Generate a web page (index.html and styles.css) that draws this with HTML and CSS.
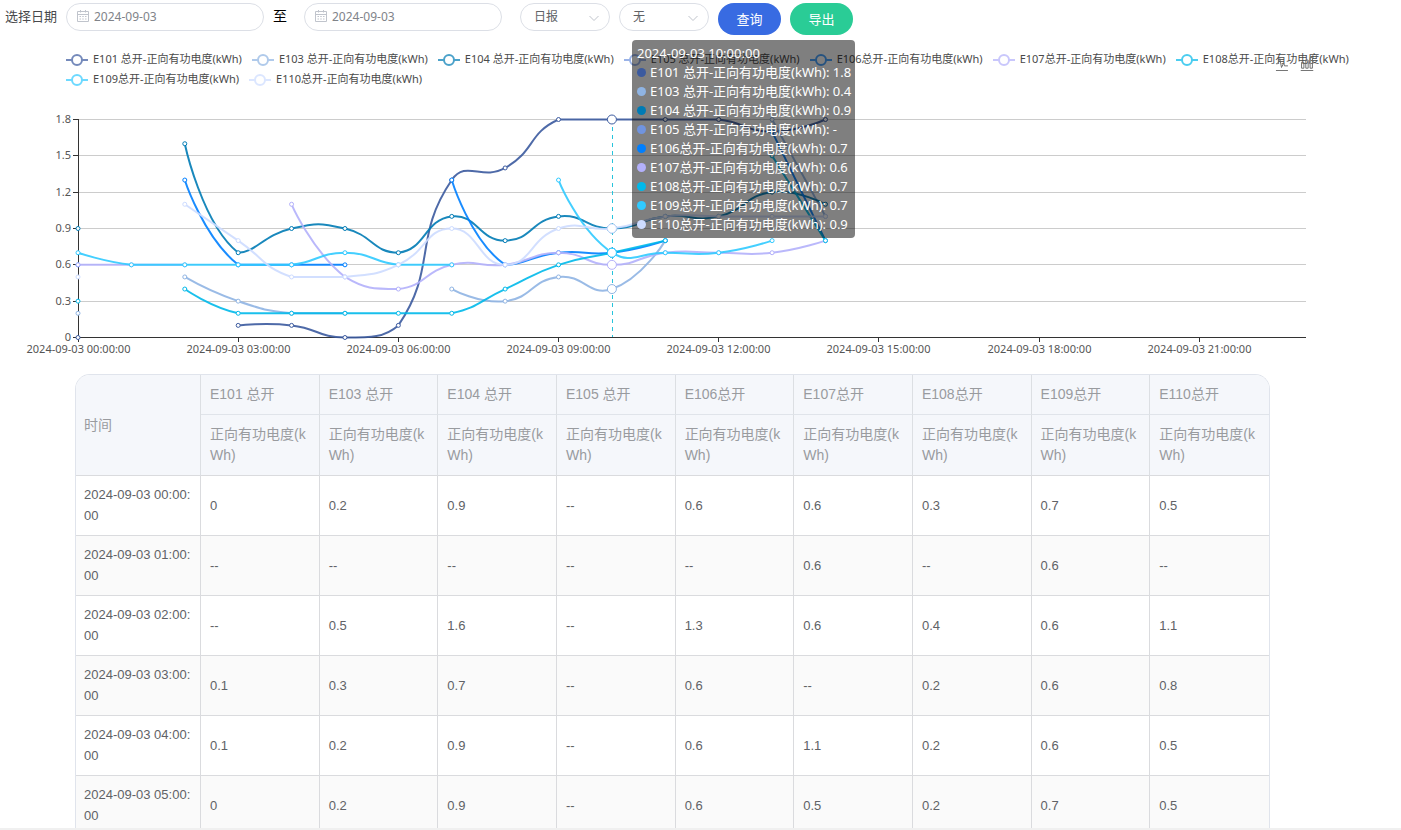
FILE: index.html
```html
<!DOCTYPE html>
<html lang="zh-CN">
<head>
    <meta charset="UTF-8">
    <title>电度报表</title>
    <link rel="stylesheet" href="styles.css">
</head>
<body>
    <form class="toolbar">
        <label class="toolbar-label" for="startDate">选择日期</label>
        <div class="date-box">
            <svg class="icon-date" viewBox="0 0 12 12"><path d="M.5 1.5h11v10H.5zM.5 4.5h11M3.5 0v2.5M8.5 0v2.5M2.5 6.5h1.5M5.25 6.5h1.5M8 6.5h1.5M2.5 9h1.5M5.25 9h1.5M8 9h1.5"/></svg>
            <input type="text" id="startDate" value="2024-09-03">
        </div>
        <label class="toolbar-to" for="endDate">至</label>
        <div class="date-box">
            <svg class="icon-date" viewBox="0 0 12 12"><path d="M.5 1.5h11v10H.5zM.5 4.5h11M3.5 0v2.5M8.5 0v2.5M2.5 6.5h1.5M5.25 6.5h1.5M8 6.5h1.5M2.5 9h1.5M5.25 9h1.5M8 9h1.5"/></svg>
            <input type="text" id="endDate" value="2024-09-03">
        </div>
        <div class="select-box select-first">
            <select id="reportType" aria-label="报表类型"><option>日报</option><option>月报</option><option>年报</option></select>
            <svg class="icon-arrow" viewBox="0 0 12 12"><path d="M1.5 4L6 8.5 10.5 4"/></svg>
        </div>
        <div class="select-box">
            <select id="compareType" aria-label="对比"><option>无</option><option>同比</option><option>环比</option></select>
            <svg class="icon-arrow" viewBox="0 0 12 12"><path d="M1.5 4L6 8.5 10.5 4"/></svg>
        </div>
        <button type="button" class="btn btn-query">查询</button>
        <button type="button" class="btn btn-export">导出</button>
    </form>

    <div class="chart" id="chart">
        <div class="toolbox">
            <svg viewBox="0 0 60 60"><path d="M4.1,28.9h7.1l9.3-22l7.4,38l9.7-19.7l3,12.8h14.9M4.1,58h51.4"/></svg>
            <svg viewBox="0 0 60 60"><path d="M6.7,22.9h10V48h-10V22.9zM24.9,13h10v35h-10V13zM43.2,2h10v46h-10V2zM3.1,58h53.7"/></svg>
        </div>
        <div class="legend" id="legend"></div>
        <svg class="plot" id="plot"></svg>
        <div class="tooltip" id="tooltip"></div>
    </div>

    <div class="table-wrap">
        <table class="data-table">
            <thead id="tableHead"></thead>
            <tbody id="tableBody"></tbody>
        </table>
    </div>
    <script src="chart.js"></script>
</body>
</html>
```

FILE: styles.css
```css
* { box-sizing: border-box; }
body { margin: 0; height: 100vh; display: flex; flex-direction: column; overflow: hidden; background-color: #fff; border-bottom: 2px solid #f0f0f0; font-family: "Noto Sans", "Noto Sans CJK SC", sans-serif; font-size: 13px; color: #606266; }

.toolbar { display: flex; align-items: flex-start; padding: 3px 5px 0; }
.toolbar-label { width: 61px; line-height: 26px; color: #48494c; }
.toolbar-to { width: 40px; padding-left: 9px; font-size: 14px; line-height: 26px; color: #000; }
.date-box { position: relative; width: 198px; }
.date-box input { width: 100%; height: 28px; padding: 0 14px 1px 27px; border: 1px solid #dcdfe6; border-radius: 14px; background: none; font-family: inherit; font-size: 12px; color: #808389; outline: none; }
.icon-date { position: absolute; left: 11px; top: 7px; width: 12px; height: 12px; fill: none; stroke: #c0c4cc; }
.select-box { position: relative; width: 90px; margin-right: 9px; }
.select-first { margin-left: 18px; }
.select-box select { width: 100%; height: 28px; padding: 0 28px 1px 13px; border: 1px solid #dcdfe6; border-radius: 14px; background: none; appearance: none; font-family: inherit; font-size: 12px; color: #606266; outline: none; }
.icon-arrow { position: absolute; right: 10px; top: 9px; width: 12px; height: 12px; fill: none; stroke: #c0c4cc; pointer-events: none; }
.btn { width: 63px; height: 32px; margin-right: 9px; padding: 0 0 2px; border: none; border-radius: 16px; font-family: inherit; font-size: 13px; color: #fff; cursor: pointer; }
.btn-query { background-color: #386be2; }
.btn-export { background-color: #2acc96; }

.chart { position: relative; flex: none; padding-top: 14px; }
.legend { display: flex; flex-wrap: wrap; column-gap: 10px; padding: 0 40px 0 66px; }
.legend-item { display: flex; align-items: center; gap: 5px; padding: 0; border: none; background: none; font-family: inherit; font-size: 11px; line-height: 20px; color: #4a4a4a; cursor: pointer; white-space: nowrap; }
.legend-item svg { width: 22px; height: 14px; fill: #fff; stroke-width: 2; opacity: 0.7; }
.toolbox { position: absolute; top: 22px; right: 87px; display: flex; gap: 11px; }
.toolbox svg { width: 14px; height: 14px; fill: none; stroke: #666; stroke-width: 4; }
.plot { display: block; width: 100%; height: 285px; }
.plot text { font-size: 11px; fill: #555; }
.grid-line { stroke: #ccc; }
.axis-line { stroke: #333; }
.pointer-line { stroke: #27c4dc; stroke-dasharray: 4 4; }
.series-line { fill: none; stroke-width: 2; opacity: 0.9; }
.series-dot { fill: #fff; }
.tooltip { position: absolute; top: 5px; padding: 4px 4px 4px 5px; border-radius: 4px; background-color: rgba(0, 0, 0, 0.5); color: #fff; font-size: 13px; line-height: 19px; white-space: nowrap; pointer-events: none; }
.tooltip-row { display: flex; align-items: center; gap: 4px; }
.tooltip-dot { width: 9px; height: 9px; border-radius: 50%; }

.table-wrap { flex: 1; min-height: 0; overflow: hidden; margin: 0 131px 0 75px; border: 1px solid #e0e4ec; border-bottom: none; border-radius: 15px 15px 0 0; }
.data-table { width: 100%; table-layout: fixed; border-collapse: separate; border-spacing: 0; font-family: "Liberation Sans", "Noto Sans CJK SC", sans-serif; line-height: 21px; text-align: left; word-break: break-all; }
.data-table th { padding: 9px 8px 9px 9px; border-right: 1px solid #dcdfe3; border-bottom: 1px solid #e0e4ea; background-color: #f5f7fb; font-size: 14px; font-weight: normal; color: #999b9f; }
.data-table tr:last-child th, .data-table .th-time { border-bottom-color: #dadbde; }
.data-table .th-time { width: 125px; }
.data-table td { padding: 8px 8px 9px 9px; border-right: 1px solid #dadbde; border-bottom: 1px solid #dadbde; font-size: 13px; }
.data-table .th-time, .data-table td:first-child { padding-left: 8px; }
.data-table th:last-child, .data-table td:last-child { border-right: none; }
.data-table tbody tr:nth-child(even) { background-color: #fafafa; }
```

FILE: chart.js
```js
const METRIC = '正向有功电度(kWh)';
const DAY = '2024-09-03';
const HOVER = 10;
const _ = null;

// hourly readings, null = no data
const series = [
    { name: 'E101 总开', color: '#3b5a9f', data: [0, _, _, 0.1, 0.1, 0, 0.1, 1.3, 1.4, 1.8, 1.8, 1.8, 1.8, 1.7, 1.8] },
    { name: 'E103 总开', color: '#8fb4e3', data: [0.2, _, 0.5, 0.3, 0.2, 0.2, _, 0.4, 0.3, 0.5, 0.4, 0.8, _, 1.8, 1.0] },
    { name: 'E104 总开', color: '#007bb5', data: [0.9, _, 1.6, 0.7, 0.9, 0.9, 0.7, 1.0, 0.8, 1.0, 0.9, 1.0, 1.0, 1.2, 1.1] },
    { name: 'E105 总开', color: '#7094df', data: [] },
    { name: 'E106总开', color: '#007fff', data: [0.6, _, 1.3, 0.6, 0.6, 0.6, _, 1.3, 0.6, 0.7, 0.7, 0.8, _, 1.7, 0.8] },
    { name: 'E107总开', color: '#b3b0fb', data: [0.6, 0.6, 0.6, _, 1.1, 0.5, 0.4, 0.6, 0.6, 0.7, 0.6, 0.7, 0.7, 0.7, 0.8] },
    { name: 'E108总开', color: '#00b9ea', data: [0.3, _, 0.4, 0.2, 0.2, 0.2, 0.2, 0.2, 0.4, 0.6, 0.7, 0.8, _, 1.5, 0.8] },
    { name: 'E109总开', color: '#30caff', data: [0.7, 0.6, 0.6, 0.6, 0.6, 0.7, 0.6, 0.6, _, 1.3, 0.7, 0.7, 0.7, 0.8] },
    { name: 'E110总开', color: '#cddcff', data: [0.5, _, 1.1, 0.8, 0.5, 0.5, 0.6, 0.9, 0.6, 0.9, 0.9, 1.0, 1.0, 1.0, 1.0] }
];

const hourLabel = h => `${DAY} ${String(h).padStart(2, '0')}:00:00`;
const clamp = (v, lo, hi) => Math.min(Math.max(v, lo), hi);
const dist = (a, b) => Math.hypot(a[0] - b[0], a[1] - b[1]);

// smooth curve through one unbroken run of points
function smoothPath(pts, minY, maxY) {
    let d = `M${pts[0]}`;
    let cp0 = pts[0];
    for (let i = 1; i < pts.length; i++) {
        const p = pts[i], prev = pts[i - 1], next = pts[i + 1];
        let cp1 = p, nextCp0 = p;
        if (next) {
            const a = dist(p, prev), b = dist(next, p), r = b / (a + b);
            const vx = (next[0] - prev[0]) * 0.5, vy = (next[1] - prev[1]) * 0.5;
            cp1 = [p[0] - vx * (1 - r), clamp(p[1] - vy * (1 - r), minY, maxY)];
            nextCp0 = [p[0] + vx * r, clamp(p[1] + vy * r, minY, maxY)];
        }
        d += `C${cp0} ${cp1} ${p}`;
        cp0 = nextCp0;
    }
    return d;
}

function drawPlot() {
    const plot = document.getElementById('plot');
    const left = 78, right = plot.clientWidth - 95, top = 30, bottom = 248;
    const x = h => left + (right - left) * h / 23;
    const y = v => bottom - (bottom - top) * v / 1.8;
    let out = '';

    for (let i = 0; i <= 6; i++) {
        const gy = Math.round(y(i * 0.3)) + 0.5;
        if (i) out += `<line class="grid-line" x1="${left}" x2="${right}" y1="${gy}" y2="${gy}"/>`;
        out += `<line class="axis-line" x1="${left - 5}" x2="${left}" y1="${gy}" y2="${gy}"/>`;
        out += `<text x="${left - 7}" y="${gy + 3}" text-anchor="end">${i ? (i * 0.3).toFixed(1) : 0}</text>`;
    }
    out += `<path class="axis-line" fill="none" d="M${left + 0.5} ${top}V${bottom + 0.5}H${right}"/>`;
    for (let h = 0; h < 24; h += 3) {
        const tx = Math.floor(x(h)) + 0.5;
        out += `<line class="axis-line" x1="${tx}" x2="${tx}" y1="${bottom}" y2="${bottom + 5}"/>`;
        out += `<text x="${tx}" y="${bottom + 16}" text-anchor="middle">${hourLabel(h)}</text>`;
    }

    const px = Math.round(x(HOVER)) + 0.5;
    out += `<line class="pointer-line" x1="${px}" x2="${px}" y1="${top}" y2="${bottom}"/>`;

    series.forEach(s => {
        const valid = s.data.filter(v => v !== null).map(y);
        const minY = Math.min(...valid), maxY = Math.max(...valid);
        let run = [];
        [...s.data, null].forEach((v, h) => {
            if (v !== null) { run.push([x(h), y(v) + 0.5]); return; }
            if (run.length > 1) out += `<path class="series-line" stroke="${s.color}" d="${smoothPath(run, minY + 0.5, maxY + 0.5)}"/>`;
            run = [];
        });
        s.data.forEach((v, h) => {
            if (v !== null) out += `<circle class="series-dot" stroke="${s.color}" cx="${x(h)}" cy="${y(v) + 0.5}" r="${h === HOVER ? 4.5 : 2}"/>`;
        });
    });

    plot.innerHTML = out;
    document.getElementById('tooltip').style.left = `${Math.round(x(HOVER)) + 20}px`;
}

document.getElementById('legend').innerHTML = series.map(s =>
    `<button type="button" class="legend-item"><svg viewBox="0 0 22 14" stroke="${s.color}"><path d="M0 8h22"/><circle cx="11" cy="8" r="5"/></svg>${s.name}-${METRIC}</button>`
).join('');

document.getElementById('tooltip').innerHTML = `<div>${hourLabel(HOVER)}</div>` + series.map(s =>
    `<div class="tooltip-row"><span class="tooltip-dot" style="background-color:${s.color}"></span>${s.name}-${METRIC}: ${s.data[HOVER] ?? '-'}</div>`
).join('');

document.getElementById('tableHead').innerHTML =
    `<tr><th class="th-time" rowspan="2">时间</th>${series.map(s => `<th>${s.name}</th>`).join('')}</tr>` +
    `<tr>${series.map(() => `<th>${METRIC}</th>`).join('')}</tr>`;

document.getElementById('tableBody').innerHTML = [0, 1, 2, 3, 4, 5].map(h =>
    `<tr><td>${hourLabel(h)}</td>${series.map(s => `<td>${s.data[h] ?? '--'}</td>`).join('')}</tr>`
).join('');

drawPlot();
window.addEventListener('resize', drawPlot);
```
